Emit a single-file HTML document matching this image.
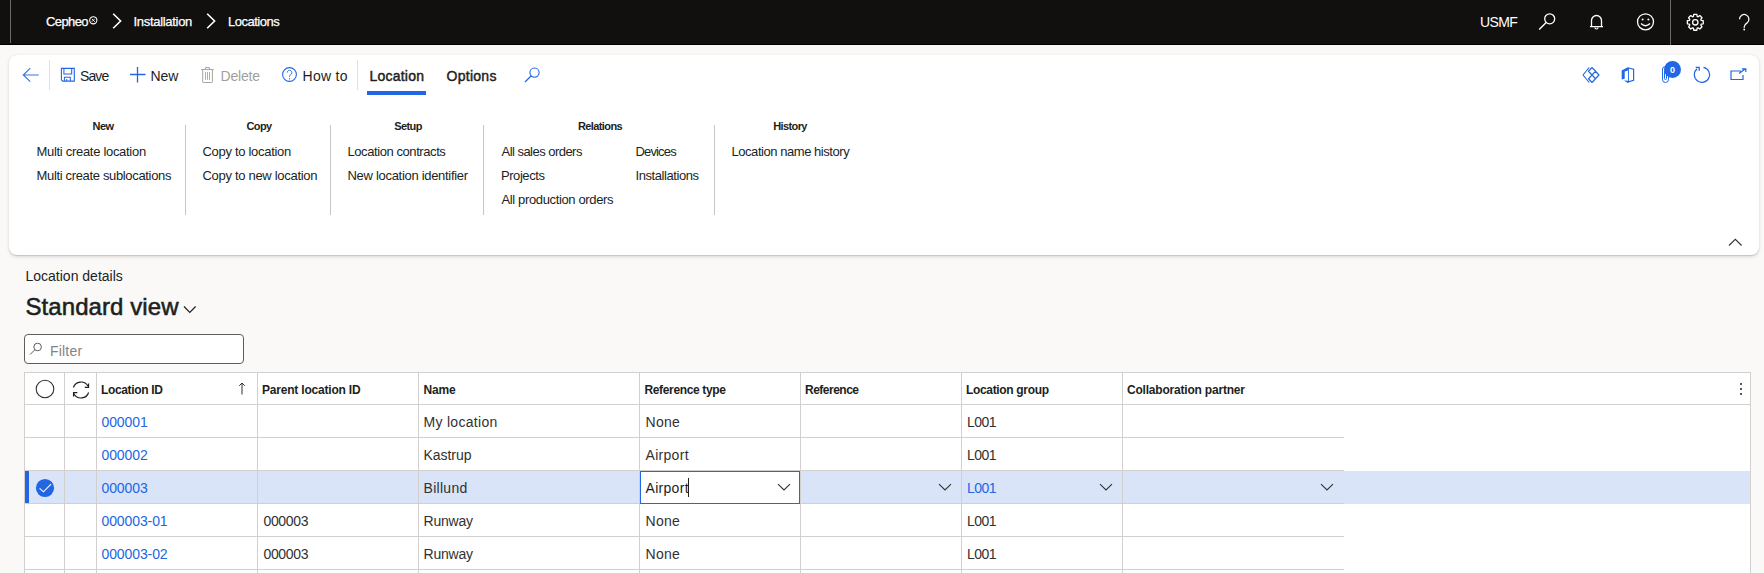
<!DOCTYPE html>
<html><head><meta charset="utf-8"><title>Locations</title><style>
*{margin:0;padding:0;box-sizing:border-box}
html,body{width:1764px;height:573px;overflow:hidden;background:#faf9f8;font-family:"Liberation Sans",sans-serif;color:#201f1e}
.t{position:absolute;line-height:1;white-space:nowrap}
.a{position:absolute}
svg{position:absolute;overflow:visible}
</style></head>
<body>
<div class="a" style="left:0;top:0;width:1764px;height:45px;background:#11100f;border-bottom:1px solid #000"></div>
<div class="a" style="left:10px;top:0;width:1px;height:43px;background:#6b6a69"></div>
<div class="a" style="left:1670px;top:0;width:1px;height:45px;background:#6b6a69"></div>
<div class="t" style="left:46.0px;top:15.00px;font-size:13px;color:#ffffff;letter-spacing:-0.6px;-webkit-text-stroke:0.25px #fff;">Cepheo</div>
<svg style="left:89px;top:16px" width="9" height="9" viewBox="0 0 9 9"><circle cx="4.3" cy="4.3" r="3.6" fill="none" stroke="#fff" stroke-width="1.1"/><path d="M2.8 2.8L5.8 5.8M5.8 2.8L2.8 5.8" stroke="#fff" stroke-width="0.9"/></svg>
<svg style="left:112px;top:13px" width="10" height="16" viewBox="0 0 10 16"><path d="M1.2 0.8L8.6 8L1.2 15.2" fill="none" stroke="#fff" stroke-width="1.6"/></svg>
<div class="t" style="left:133.5px;top:15.00px;font-size:13px;color:#ffffff;letter-spacing:-0.3px;-webkit-text-stroke:0.25px #fff;">Installation</div>
<svg style="left:206px;top:13px" width="10" height="16" viewBox="0 0 10 16"><path d="M1.2 0.8L8.6 8L1.2 15.2" fill="none" stroke="#fff" stroke-width="1.6"/></svg>
<div class="t" style="left:228.0px;top:15.00px;font-size:13px;color:#ffffff;letter-spacing:-0.5px;-webkit-text-stroke:0.25px #fff;">Locations</div>
<div class="t" style="left:1480.0px;top:15.15px;font-size:14px;color:#ffffff;letter-spacing:-0.6px;">USMF</div>
<svg style="left:1538px;top:13px" width="18" height="18" viewBox="0 0 18 18"><circle cx="11.7" cy="5.8" r="5" fill="none" stroke="#fff" stroke-width="1.3"/><path d="M8.2 9.4L1.2 16.5" stroke="#fff" stroke-width="1.4"/></svg>
<svg style="left:1589px;top:14px" width="15" height="16" viewBox="0 0 15 16"><path d="M2.5 12.5V6.5A5 5 0 0 1 12.5 6.5V12.5M1 12.7H14" fill="none" stroke="#fff" stroke-width="1.3"/><path d="M6 13.5A1.5 1.5 0 0 0 9 13.5" fill="none" stroke="#fff" stroke-width="1.2"/></svg>
<svg style="left:1636px;top:13px" width="19" height="18" viewBox="0 0 19 18"><circle cx="9.5" cy="8.8" r="8" fill="none" stroke="#fff" stroke-width="1.3"/><circle cx="6.6" cy="6.6" r="1" fill="#fff"/><circle cx="12.4" cy="6.6" r="1" fill="#fff"/><path d="M5 10.5Q9.5 15 14 10.5" fill="none" stroke="#fff" stroke-width="1.3"/></svg>
<svg style="left:1686px;top:12.7px" width="19" height="19" viewBox="0 0 19 19"><path d="M7.44 3.39 L7.75 1.35 L10.85 1.35 L11.16 3.39 L12.16 3.80 L13.83 2.58 L16.02 4.77 L14.80 6.44 L15.21 7.44 L17.25 7.75 L17.25 10.85 L15.21 11.16 L14.80 12.16 L16.02 13.83 L13.83 16.02 L12.16 14.80 L11.16 15.21 L10.85 17.25 L7.75 17.25 L7.44 15.21 L6.44 14.80 L4.77 16.02 L2.58 13.83 L3.80 12.16 L3.39 11.16 L1.35 10.85 L1.35 7.75 L3.39 7.44 L3.80 6.44 L2.58 4.77 L4.77 2.58 L6.44 3.80Z" fill="none" stroke="#fff" stroke-width="1.3" stroke-linejoin="round"/><circle cx="9.3" cy="9.3" r="2.7" fill="none" stroke="#fff" stroke-width="1.3"/></svg>
<svg style="left:1736px;top:12px" width="16" height="20" viewBox="0 0 16 20"><path d="M3.5 7.2A4.7 4.7 0 1 1 11.1 10.9Q8.2 12.7 8.2 15V15.7" fill="none" stroke="#fff" stroke-width="1.3"/><circle cx="8.2" cy="17.5" r="0.9" fill="#fff"/></svg>
<div class="a" style="left:9px;top:55px;width:1750px;height:200px;background:#fff;border-radius:8px;box-shadow:0 1.6px 3.6px rgba(0,0,0,.13),0 0.3px 0.9px rgba(0,0,0,.11)"></div>
<svg style="left:22px;top:67px" width="18" height="16" viewBox="0 0 18 16"><path d="M8.3 1.1L1.3 8L8.3 14.6M1.5 8H16.7" fill="none" stroke="#3f72e6" stroke-width="1.15"/></svg>
<div class="a" style="left:49px;top:60px;width:1px;height:30px;background:#e1dfdd"></div>
<svg style="left:56px;top:63px" width="22" height="23" viewBox="0 0 22 23"><path d="M5.4 5.4H18.3V18.1H6.7L5.4 16.8Z" fill="none" stroke="#2266e3" stroke-width="1.1"/><path d="M7.9 5.4V11H15.7V5.4M8.4 18.1V14.3H14.3V18.1M10.7 16V18.1" fill="none" stroke="#2266e3" stroke-width="1.05"/></svg>
<div class="t" style="left:80.0px;top:69.15px;font-size:14px;letter-spacing:-0.9px;">Save</div>
<svg style="left:129px;top:66px" width="17" height="17" viewBox="0 0 17 17"><path d="M8.5 1V16.5M1 8.5H16.5" fill="none" stroke="#2266e3" stroke-width="1.3"/></svg>
<div class="t" style="left:150.5px;top:69.15px;font-size:14px;letter-spacing:-0.1px;">New</div>
<svg style="left:195px;top:62px" width="25" height="26" viewBox="0 0 25 26"><path d="M6.1 7.5H18.6M10.5 7.5V5.5H14.5V7.5M7.7 7.5V19.9Q7.7 20.5 8.3 20.5H16.8Q17.4 20.5 17.4 19.9V7.5" fill="none" stroke="#a8a6a4" stroke-width="1"/><path d="M10.5 10V17.8M12.5 10V17.8M14.5 10V17.8" fill="none" stroke="#a8a6a4" stroke-width="0.9"/></svg>
<div class="t" style="left:220.5px;top:69.15px;font-size:14px;color:#a19f9d;letter-spacing:-0.2px;">Delete</div>
<svg style="left:282px;top:67px" width="15" height="15" viewBox="0 0 15 15"><circle cx="7.5" cy="7.5" r="6.9" fill="none" stroke="#2266e3" stroke-width="1.1"/><path d="M5.2 5.6A2.35 2.35 0 1 1 8.7 7.7Q7.5 8.4 7.5 9.6V10" fill="none" stroke="#2266e3" stroke-width="0.95"/><circle cx="7.5" cy="11.7" r="0.65" fill="#2266e3"/></svg>
<div class="t" style="left:302.5px;top:69.15px;font-size:14px;letter-spacing:0.3px;">How to</div>
<div class="a" style="left:357px;top:60px;width:1px;height:30px;background:#e1dfdd"></div>
<div class="t" style="left:369.5px;top:69.15px;font-size:14px;letter-spacing:0.22px;-webkit-text-stroke:0.45px #201f1e;">Location</div>
<div class="a" style="left:367px;top:91px;width:59px;height:4px;background:#2266e3"></div>
<div class="t" style="left:446.5px;top:69.15px;font-size:14px;letter-spacing:0.28px;-webkit-text-stroke:0.45px #201f1e;">Options</div>
<svg style="left:524px;top:67px" width="16" height="16" viewBox="0 0 16 16"><circle cx="10.5" cy="5.6" r="4.6" fill="none" stroke="#2266e3" stroke-width="1.1"/><path d="M7.3 8.8L1 15" stroke="#2266e3" stroke-width="1.2"/></svg>
<svg style="left:1578px;top:62px" width="26" height="26" viewBox="0 0 26 26"><path d="M11.2 5.5L5 13L11.2 20.5M14 5.5L21 13L14 20.5M14 5.5L10.5 9.25L17.5 16.75M14 20.5L10.5 16.75L17.5 9.25" fill="none" stroke="#2266e3" stroke-width="1.15" stroke-linejoin="round"/></svg>
<svg style="left:1616px;top:62px" width="26" height="26" viewBox="0 0 26 26"><path d="M5.7 8.4L11.8 5.2L12.9 5.5V20.6L11.8 20.9L7.9 18.4L12 18.7V8.6L8.7 9.6V16.7L5.7 17.6Z" fill="#2266e3"/><path d="M12.4 6L17.6 7.2V18.4L12.4 19.9" fill="none" stroke="#2266e3" stroke-width="1.2"/></svg>
<svg style="left:1661px;top:66px" width="9" height="18" viewBox="0 0 9 18"><path d="M7.5 4V13.5A3 3 0 0 1 1.5 13.5V3A2 2 0 0 1 5.5 3V12.5A1 1 0 0 1 3.5 12.5V5" fill="none" stroke="#2266e3" stroke-width="1"/></svg>
<div class="a" style="left:1664px;top:61px;width:17px;height:17px;border-radius:50%;background:#2266e3"></div>
<div class="t" style="left:1670.0px;top:65.68px;font-size:9px;font-weight:700;color:#fff;letter-spacing:0px;">0</div>
<svg style="left:1693px;top:66px" width="18" height="18" viewBox="0 0 18 18"><path d="M4.2 2.8A7.6 7.6 0 1 0 10.5 1.3" fill="none" stroke="#2266e3" stroke-width="1.2"/><path d="M2.7 1.3H6.2V4.8" fill="none" stroke="#2266e3" stroke-width="1.3"/></svg>
<svg style="left:1730px;top:68px" width="17" height="13" viewBox="0 0 17 13"><path d="M11 3H1V11.5H13V7M9 5.5L15.5 0.8M12 0.8H15.8V4" fill="none" stroke="#2266e3" stroke-width="1.2"/></svg>
<div class="t" style="left:43px;width:120px;text-align:center;top:120.99px;font-size:11px;font-weight:700;letter-spacing:-0.6px">New</div>
<div class="t" style="left:199px;width:120px;text-align:center;top:120.99px;font-size:11px;font-weight:700;letter-spacing:-0.6px">Copy</div>
<div class="t" style="left:348px;width:120px;text-align:center;top:120.99px;font-size:11px;font-weight:700;letter-spacing:-0.6px">Setup</div>
<div class="t" style="left:540px;width:120px;text-align:center;top:120.99px;font-size:11px;font-weight:700;letter-spacing:-0.6px">Relations</div>
<div class="t" style="left:730px;width:120px;text-align:center;top:120.99px;font-size:11px;font-weight:700;letter-spacing:-0.6px">History</div>
<div class="t" style="left:36.5px;top:145.00px;font-size:13px;letter-spacing:-0.3px;">Multi create location</div>
<div class="t" style="left:36.5px;top:169.00px;font-size:13px;letter-spacing:-0.34px;">Multi create sublocations</div>
<div class="t" style="left:202.5px;top:145.00px;font-size:13px;letter-spacing:-0.3px;">Copy to location</div>
<div class="t" style="left:202.5px;top:169.00px;font-size:13px;letter-spacing:-0.3px;">Copy to new location</div>
<div class="t" style="left:347.5px;top:145.00px;font-size:13px;letter-spacing:-0.42px;">Location contracts</div>
<div class="t" style="left:347.5px;top:169.00px;font-size:13px;letter-spacing:-0.3px;">New location identifier</div>
<div class="t" style="left:501.5px;top:145.00px;font-size:13px;letter-spacing:-0.53px;">All sales orders</div>
<div class="t" style="left:501.0px;top:169.00px;font-size:13px;letter-spacing:-0.44px;">Projects</div>
<div class="t" style="left:501.5px;top:193.00px;font-size:13px;letter-spacing:-0.36px;">All production orders</div>
<div class="t" style="left:635.5px;top:145.00px;font-size:13px;letter-spacing:-0.85px;">Devices</div>
<div class="t" style="left:635.5px;top:169.00px;font-size:13px;letter-spacing:-0.42px;">Installations</div>
<div class="t" style="left:731.5px;top:145.00px;font-size:13px;letter-spacing:-0.45px;">Location name history</div>
<div class="a" style="left:185px;top:125px;width:1px;height:90px;background:#c8c6c4"></div>
<div class="a" style="left:330px;top:125px;width:1px;height:90px;background:#c8c6c4"></div>
<div class="a" style="left:483px;top:125px;width:1px;height:90px;background:#c8c6c4"></div>
<div class="a" style="left:714px;top:125px;width:1px;height:90px;background:#c8c6c4"></div>
<svg style="left:1728px;top:238px" width="15" height="9" viewBox="0 0 15 9"><path d="M1 7.5L7.3 1.3L13.6 7.5" fill="none" stroke="#323130" stroke-width="1.1"/></svg>
<div class="t" style="left:25.5px;top:269.15px;font-size:14px;letter-spacing:0px;">Location details</div>
<div class="t" style="left:25.5px;top:294.68px;font-size:24px;letter-spacing:0.08px;-webkit-text-stroke:0.55px #201f1e;">Standard view</div>
<svg style="left:183px;top:305px" width="14" height="9" viewBox="0 0 14 9"><path d="M1 1.5L6.8 7.3L12.6 1.5" fill="none" stroke="#201f1e" stroke-width="1.2"/></svg>
<div class="a" style="left:24px;top:334px;width:220px;height:30px;border:1px solid #605e5c;border-radius:4px;background:#fff"></div>
<svg style="left:29px;top:342px" width="14" height="14" viewBox="0 0 14 14"><circle cx="8.6" cy="5" r="3.8" fill="none" stroke="#605e5c" stroke-width="1"/><path d="M5.9 7.7L1 12.6" stroke="#605e5c" stroke-width="1"/></svg>
<div class="t" style="left:50.0px;top:344.15px;font-size:14px;color:#858381;letter-spacing:0.2px;">Filter</div>
<div class="a" style="left:24px;top:372px;width:1727px;height:210px;background:#fff;border:1px solid #d2d0ce"></div>
<div class="a" style="left:25px;top:471px;width:1725px;height:33px;background:#d9e4f9"></div>
<div class="a" style="left:25px;top:471px;width:4px;height:32px;background:#2266e3"></div>
<svg style="left:35px;top:478px" width="20" height="20" viewBox="0 0 20 20"><circle cx="10" cy="10" r="9.1" fill="#2266e3"/><path d="M4.6 10.4L8.5 13.8L16 6.2" fill="none" stroke="#fff" stroke-width="1.1"/></svg>
<div class="a" style="left:25px;top:404px;width:1725px;height:1px;background:#d2d0ce"></div>
<div class="a" style="left:25px;top:437px;width:1319px;height:1px;background:#d2d0ce"></div>
<div class="a" style="left:25px;top:470px;width:1319px;height:1px;background:#d2d0ce"></div>
<div class="a" style="left:25px;top:503px;width:1319px;height:1px;background:#d2d0ce"></div>
<div class="a" style="left:25px;top:536px;width:1319px;height:1px;background:#d2d0ce"></div>
<div class="a" style="left:25px;top:569px;width:1319px;height:1px;background:#d2d0ce"></div>
<div class="a" style="left:64px;top:373px;width:1px;height:200px;background:#d2d0ce"></div>
<div class="a" style="left:96px;top:373px;width:1px;height:200px;background:#d2d0ce"></div>
<div class="a" style="left:257px;top:373px;width:1px;height:200px;background:#d2d0ce"></div>
<div class="a" style="left:418px;top:373px;width:1px;height:200px;background:#d2d0ce"></div>
<div class="a" style="left:639px;top:373px;width:1px;height:200px;background:#d2d0ce"></div>
<div class="a" style="left:800px;top:373px;width:1px;height:200px;background:#d2d0ce"></div>
<div class="a" style="left:961px;top:373px;width:1px;height:200px;background:#d2d0ce"></div>
<div class="a" style="left:1122px;top:373px;width:1px;height:200px;background:#d2d0ce"></div>
<svg style="left:35px;top:379px" width="20" height="20" viewBox="0 0 20 20"><circle cx="10" cy="10" r="8.8" fill="none" stroke="#323130" stroke-width="1.1"/></svg>
<svg style="left:64px;top:375px" width="32" height="28" viewBox="0 0 32 28"><path d="M9.39 12.53A8 8 0 0 1 23.93 11M24.61 17.47A8 8 0 0 1 10.07 19" fill="none" stroke="#201f1e" stroke-width="1.2"/><path d="M24.5 8.6V12.4H20.8M9.6 21.4V17.6H13.3" fill="none" stroke="#201f1e" stroke-width="1.3"/></svg>
<div class="t" style="left:101.0px;top:383.84px;font-size:12px;font-weight:700;letter-spacing:-0.35px;">Location ID</div>
<div class="t" style="left:262.0px;top:383.84px;font-size:12px;font-weight:700;letter-spacing:-0.2px;">Parent location ID</div>
<div class="t" style="left:423.5px;top:383.84px;font-size:12px;font-weight:700;letter-spacing:-0.2px;">Name</div>
<div class="t" style="left:644.5px;top:383.84px;font-size:12px;font-weight:700;letter-spacing:-0.36px;">Reference type</div>
<div class="t" style="left:805.0px;top:383.84px;font-size:12px;font-weight:700;letter-spacing:-0.5px;">Reference</div>
<div class="t" style="left:966.0px;top:383.84px;font-size:12px;font-weight:700;letter-spacing:-0.33px;">Location group</div>
<div class="t" style="left:1127.0px;top:383.84px;font-size:12px;font-weight:700;letter-spacing:-0.2px;">Collaboration partner</div>
<svg style="left:237.5px;top:381.5px" width="8" height="14" viewBox="0 0 8 14"><path d="M4 1V12.5M1.2 3.8L4 1L6.8 3.8" fill="none" stroke="#323130" stroke-width="1"/></svg>
<div class="a" style="left:1740px;top:383px;width:2px;height:1.7px;background:#5a5856"></div>
<div class="a" style="left:1740px;top:388px;width:2px;height:1.7px;background:#5a5856"></div>
<div class="a" style="left:1740px;top:393px;width:2px;height:1.7px;background:#5a5856"></div>
<div class="t" style="left:101.5px;top:415.15px;font-size:14px;color:#2266e3;letter-spacing:-0.1px;">000001</div>
<div class="t" style="left:423.5px;top:415.15px;font-size:14px;color:#323130;letter-spacing:0.3px;">My location</div>
<div class="t" style="left:645.5px;top:415.15px;font-size:14px;color:#323130;letter-spacing:0.3px;">None</div>
<div class="t" style="left:967.0px;top:415.15px;font-size:14px;color:#323130;letter-spacing:-0.5px;">L001</div>
<div class="t" style="left:101.5px;top:448.15px;font-size:14px;color:#2266e3;letter-spacing:-0.1px;">000002</div>
<div class="t" style="left:423.5px;top:448.15px;font-size:14px;color:#323130;letter-spacing:-0.05px;">Kastrup</div>
<div class="t" style="left:645.5px;top:448.15px;font-size:14px;color:#323130;letter-spacing:0.3px;">Airport</div>
<div class="t" style="left:967.0px;top:448.15px;font-size:14px;color:#323130;letter-spacing:-0.5px;">L001</div>
<div class="t" style="left:101.5px;top:481.15px;font-size:14px;color:#2266e3;letter-spacing:-0.1px;">000003</div>
<div class="t" style="left:423.5px;top:481.15px;font-size:14px;color:#323130;letter-spacing:0.3px;">Billund</div>
<div class="t" style="left:967.0px;top:481.15px;font-size:14px;color:#2266e3;letter-spacing:-0.5px;">L001</div>
<div class="t" style="left:101.5px;top:514.15px;font-size:14px;color:#2266e3;letter-spacing:-0.1px;">000003-01</div>
<div class="t" style="left:263.5px;top:514.15px;font-size:14px;color:#323130;letter-spacing:-0.35px;">000003</div>
<div class="t" style="left:423.5px;top:514.15px;font-size:14px;color:#323130;letter-spacing:-0.2px;">Runway</div>
<div class="t" style="left:645.5px;top:514.15px;font-size:14px;color:#323130;letter-spacing:0.3px;">None</div>
<div class="t" style="left:967.0px;top:514.15px;font-size:14px;color:#323130;letter-spacing:-0.5px;">L001</div>
<div class="t" style="left:101.5px;top:547.15px;font-size:14px;color:#2266e3;letter-spacing:-0.1px;">000003-02</div>
<div class="t" style="left:263.5px;top:547.15px;font-size:14px;color:#323130;letter-spacing:-0.35px;">000003</div>
<div class="t" style="left:423.5px;top:547.15px;font-size:14px;color:#323130;letter-spacing:-0.2px;">Runway</div>
<div class="t" style="left:645.5px;top:547.15px;font-size:14px;color:#323130;letter-spacing:0.3px;">None</div>
<div class="t" style="left:967.0px;top:547.15px;font-size:14px;color:#323130;letter-spacing:-0.5px;">L001</div>
<div class="a" style="left:640px;top:471px;width:160px;height:33px;border:1px solid #2266e3;background:#fff"></div>
<div class="t" style="left:645.5px;top:481.15px;font-size:14px;letter-spacing:0.3px;">Airport</div>
<div class="a" style="left:688px;top:478px;width:1px;height:19px;background:#201f1e"></div>
<svg style="left:777px;top:483px" width="14" height="8" viewBox="0 0 14 8"><path d="M1 1.2L7 7L13 1.2" fill="none" stroke="#323130" stroke-width="1.1"/></svg>
<svg style="left:938px;top:483px" width="14" height="8" viewBox="0 0 14 8"><path d="M1 1.2L7 7L13 1.2" fill="none" stroke="#323130" stroke-width="1.1"/></svg>
<svg style="left:1099px;top:483px" width="14" height="8" viewBox="0 0 14 8"><path d="M1 1.2L7 7L13 1.2" fill="none" stroke="#323130" stroke-width="1.1"/></svg>
<svg style="left:1320px;top:483px" width="14" height="8" viewBox="0 0 14 8"><path d="M1 1.2L7 7L13 1.2" fill="none" stroke="#323130" stroke-width="1.1"/></svg>
</body></html>
